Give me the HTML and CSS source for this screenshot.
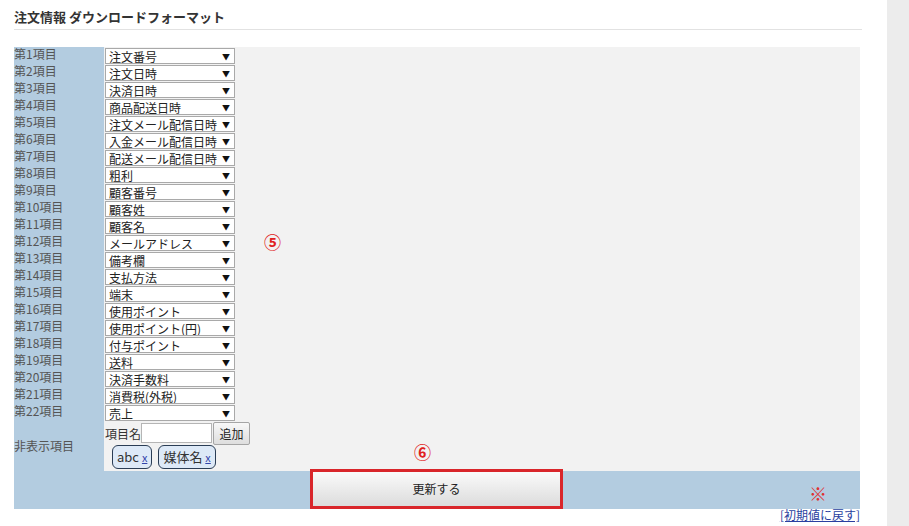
FILE: index.html
```html
<!DOCTYPE html>
<html lang="ja">
<head>
    <meta charset="UTF-8">
    <title>注文情報 ダウンロードフォーマット</title>
    <link rel="stylesheet" href="styles.css">
</head>
<body>
    <div class="page">
        <div class="main">
            <h1 class="title">注文情報 ダウンロードフォーマット</h1>
            <div class="board">
                <table class="format">
                    <tr><th>第1項目</th><td><span class="sel">注文番号</span></td></tr>
                    <tr><th>第2項目</th><td><span class="sel">注文日時</span></td></tr>
                    <tr><th>第3項目</th><td><span class="sel">決済日時</span></td></tr>
                    <tr><th>第4項目</th><td><span class="sel">商品配送日時</span></td></tr>
                    <tr><th>第5項目</th><td><span class="sel">注文メール配信日時</span></td></tr>
                    <tr><th>第6項目</th><td><span class="sel">入金メール配信日時</span></td></tr>
                    <tr><th>第7項目</th><td><span class="sel">配送メール配信日時</span></td></tr>
                    <tr><th>第8項目</th><td><span class="sel">粗利</span></td></tr>
                    <tr><th>第9項目</th><td><span class="sel">顧客番号</span></td></tr>
                    <tr><th>第10項目</th><td><span class="sel">顧客姓</span></td></tr>
                    <tr><th>第11項目</th><td><span class="sel">顧客名</span></td></tr>
                    <tr><th>第12項目</th><td><span class="sel">メールアドレス</span></td></tr>
                    <tr><th>第13項目</th><td><span class="sel">備考欄</span></td></tr>
                    <tr><th>第14項目</th><td><span class="sel">支払方法</span></td></tr>
                    <tr><th>第15項目</th><td><span class="sel">端末</span></td></tr>
                    <tr><th>第16項目</th><td><span class="sel">使用ポイント</span></td></tr>
                    <tr><th>第17項目</th><td><span class="sel">使用ポイント(円)</span></td></tr>
                    <tr><th>第18項目</th><td><span class="sel">付与ポイント</span></td></tr>
                    <tr><th>第19項目</th><td><span class="sel">送料</span></td></tr>
                    <tr><th>第20項目</th><td><span class="sel">決済手数料</span></td></tr>
                    <tr><th>第21項目</th><td><span class="sel">消費税(外税)</span></td></tr>
                    <tr><th>第22項目</th><td><span class="sel">売上</span></td></tr>
                    <tr class="hidden-row">
                        <th>非表示項目</th>
                        <td>
                            <div class="add-line">項目名<span class="text-input"></span><span class="add-btn">追加</span></div>
                            <div class="tags">
                                <span class="tag">abc <a href="#">x</a></span>
                                <span class="tag">媒体名 <a href="#">x</a></span>
                            </div>
                        </td>
                    </tr>
                    <tr class="submit-row">
                        <td colspan="2">
                            <span class="update-btn">更新する</span>
                        </td>
                    </tr>
                </table>
                <span class="mark m5">⑤</span>
                <span class="mark m6">⑥</span>
                <span class="kome">※</span>
            </div>
            <div class="reset"><a href="#">[初期値に戻す]</a></div>
        </div>
        <div class="side"></div>
    </div>
</body>
</html>
```

FILE: styles.css
```css
body {
    margin: 0;
    font-family: "Noto Sans CJK JP", "DejaVu Sans", sans-serif;
    font-size: 12px;
    color: #444;
    background: #fff;
}
.page {
    display: flex;
    height: 526px;
    overflow: hidden;
}
.main {
    width: 846px;
    padding-left: 14px;
}
.side {
    margin-left: 27px;
    width: 22px;
    background: #ececec;
}
.title {
    margin: 0;
    padding: 9px 0 4px;
    font-size: 13px;
    line-height: 16px;
    font-weight: bold;
    color: #333;
    border-bottom: 1px solid #e2e2e2;
    width: 848px;
}
.board {
    position: relative;
    margin-top: 17px;
}
.format {
    width: 846px;
    border-collapse: collapse;
}
.format th {
    width: 90px;
    padding: 0;
    height: 17px;
    line-height: 14px;
    text-align: left;
    vertical-align: top;
    font-weight: normal;
    color: #555;
    background: #b3cce0;
}
.format td {
    padding: 0 0 0 1px;
    height: 17px;
    vertical-align: top;
    background: #f2f2f2;
}
.sel {
    display: block;
    position: relative;
    box-sizing: border-box;
    width: 130px;
    height: 16px;
    margin-top: 1px;
    padding-left: 3px;
    line-height: 15px;
    background: #fff;
    border: 1px solid #a9a9a9;
    color: #222;
    font-size: 12px;
    white-space: nowrap;
    overflow: hidden;
}
.sel::after {
    content: "▼";
    position: absolute;
    right: 4px;
    top: 0;
    font-size: 8px;
    color: #111;
    background: #fff;
    padding-left: 2px;
}
.mark {
    position: absolute;
    color: #e02020;
    font-weight: bold;
    font-size: 17px;
    line-height: 18px;
}
.m5 {
    left: 250px;
    top: 186px;
}
.m6 {
    left: 400px;
    top: 396px;
}
.hidden-row th {
    height: 50px;
    vertical-align: middle;
}
.hidden-row td {
    height: 50px;
}
.add-line {
    display: flex;
    align-items: center;
    height: 24px;
    color: #333;
}
.text-input {
    box-sizing: border-box;
    width: 71px;
    height: 20px;
    background: #fff;
    border: 1px solid #b5b5b5;
}
.add-btn {
    box-sizing: border-box;
    height: 23px;
    width: 37px;
    line-height: 21px;
    text-align: center;
    margin-left: 1px;
    color: #222;
    border: 1px solid #a5a5a5;
    border-radius: 2px;
    background: linear-gradient(#f8f8f8, #dedede);
}
.tags {
    display: flex;
    gap: 6px;
    padding-left: 7px;
}
.tag {
    box-sizing: border-box;
    height: 24px;
    padding: 0 4px;
    line-height: 22px;
    font-size: 13px;
    color: #333;
    background: #dde9f7;
    border: 1px solid #2a3d55;
    border-radius: 6px;
}
.tag a {
    color: #3344aa;
    font-size: 11px;
}
.submit-row td {
    height: 38px;
    padding: 0;
    background: #b3cce0;
    vertical-align: bottom;
}
.update-btn {
    display: block;
    box-sizing: border-box;
    width: 253px;
    height: 40px;
    margin: -2px 0 0 296px;
    line-height: 34px;
    text-align: center;
    color: #222;
    border: 3px solid #d9262b;
    background: linear-gradient(#fafafa, #dcdcdc);
}
.kome {
    position: absolute;
    left: 795px;
    top: 438px;
    color: #e03030;
    font-size: 18px;
    line-height: 16px;
}
.reset {
    text-align: right;
    line-height: 14px;
    margin-top: -1px;
}
.reset a {
    color: #2a3fa0;
}
```
